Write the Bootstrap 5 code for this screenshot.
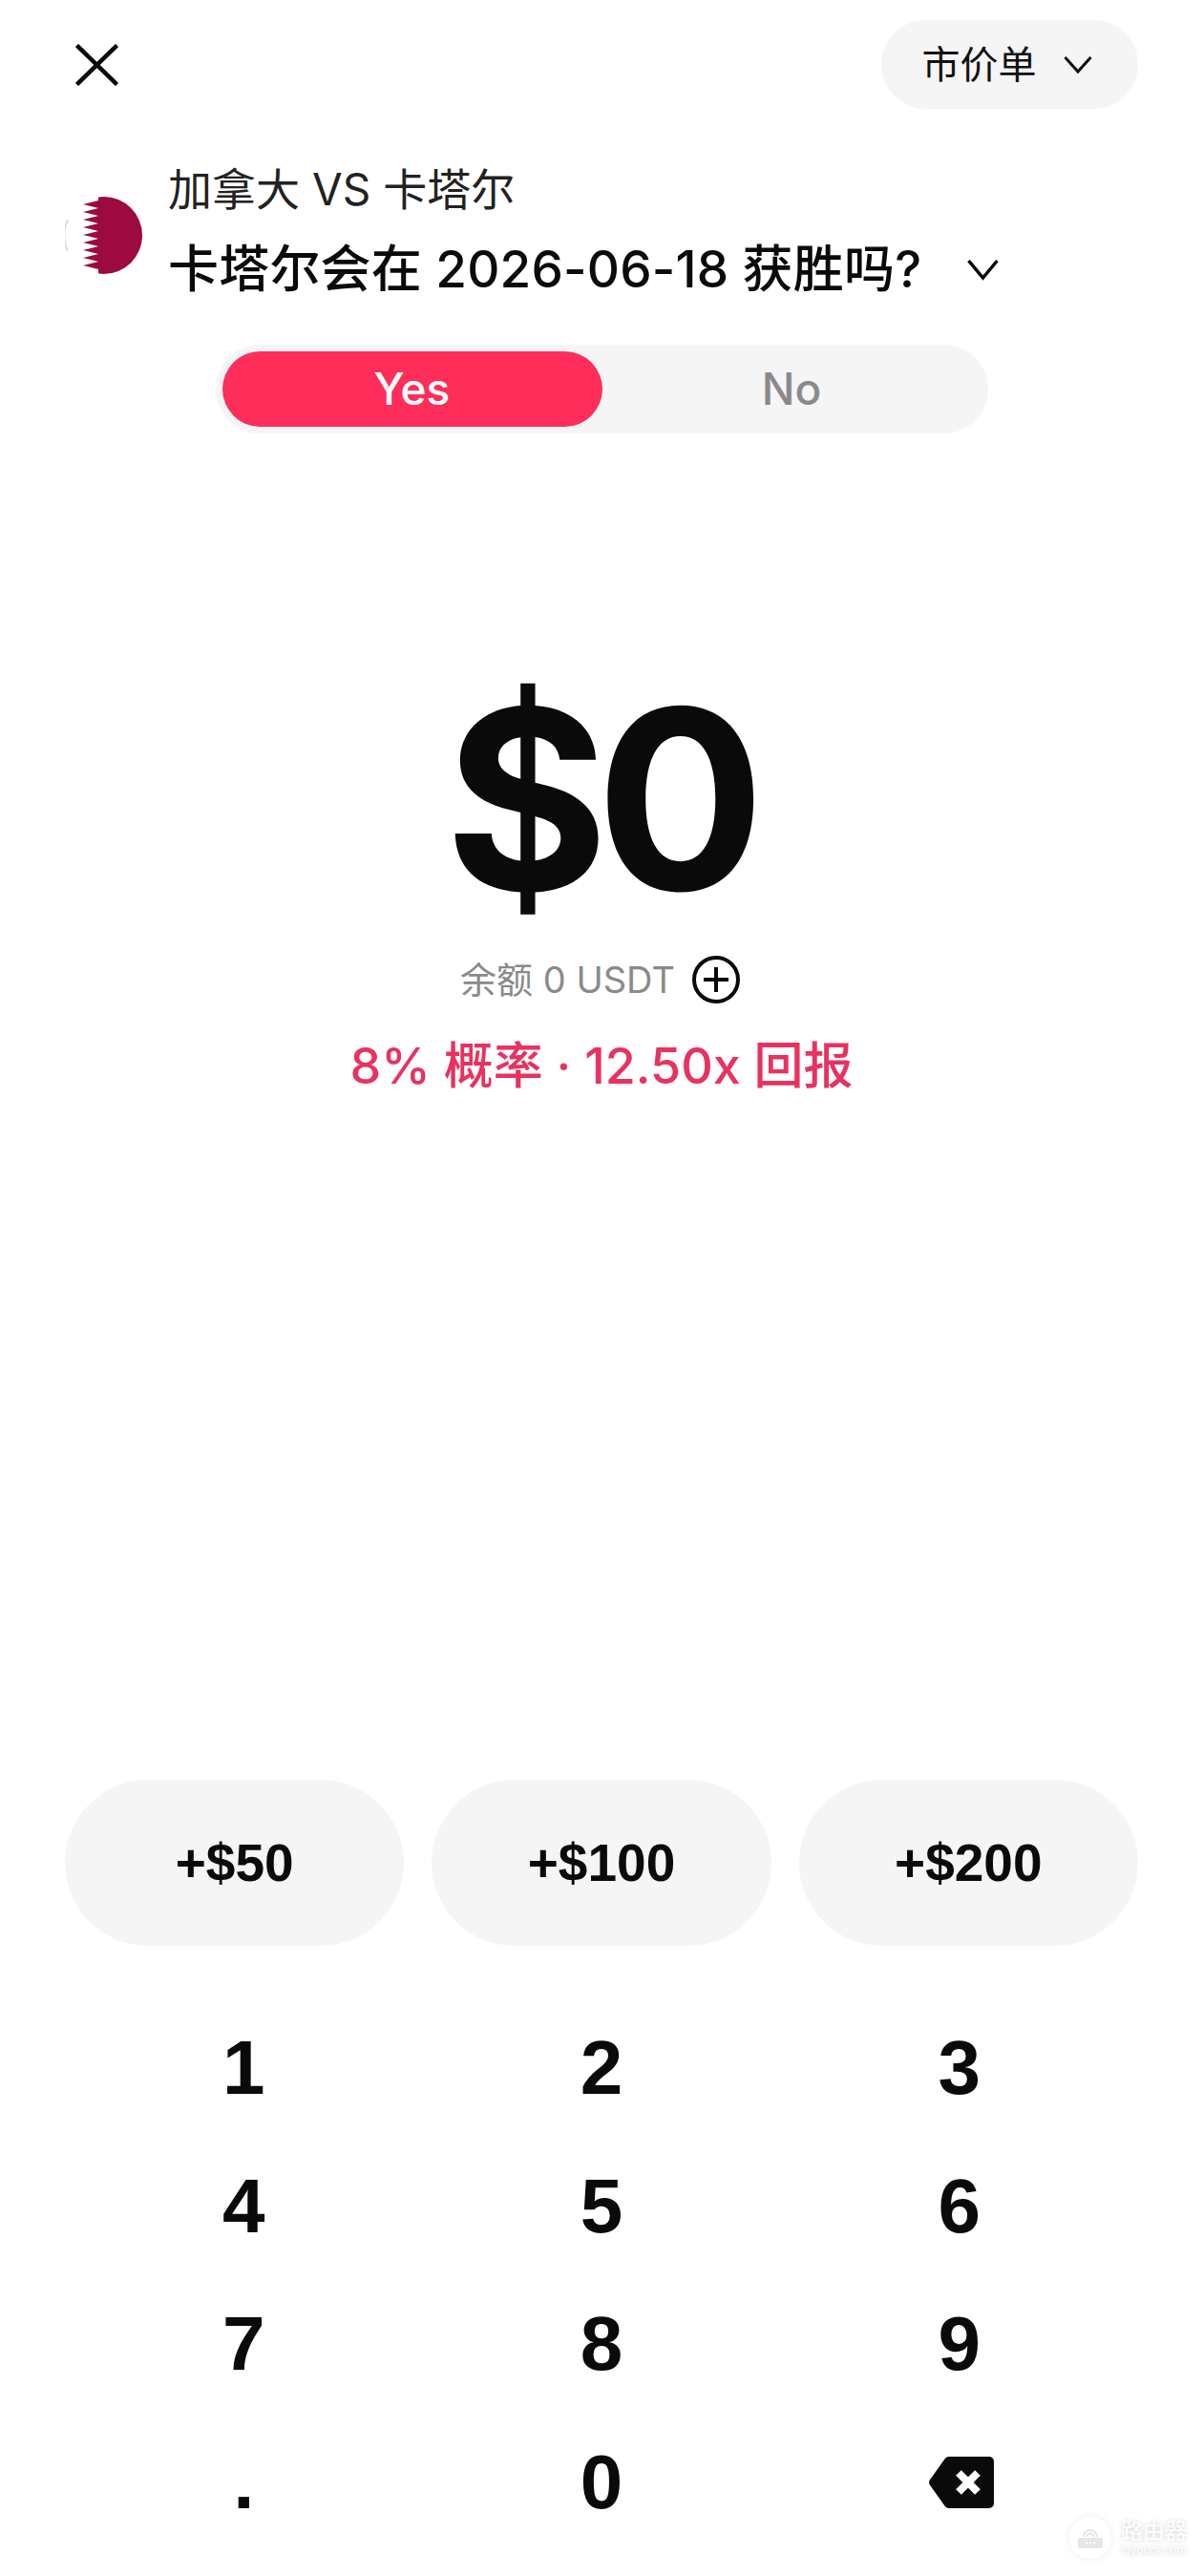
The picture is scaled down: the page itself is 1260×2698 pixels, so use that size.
<!DOCTYPE html>
<html lang="zh-CN">
<head>
    <meta charset="UTF-8">
    <meta name="viewport" content="width=device-width, initial-scale=1.0">
    <title>市价单</title>
    <link rel="stylesheet" href="https://cdn.jsdelivr.net/npm/bootstrap@5.3.0/dist/css/bootstrap.min.css">
    <style>
        body {
            background-color: #fff;
            color: #0a0a0a;
            font-family: Inter, "Noto Sans CJK SC", sans-serif;
        }
        .order-page {
            height: 2698px;
            padding: 21px 68px 26px 68px;
            overflow: hidden;
        }
        .close-btn {
            margin-left: 11px;
            line-height: 0;
        }
        .type-pill {
            width: 269px;
            height: 93px;
            background-color: #f5f5f6;
            font-size: 40px;
            gap: 28px;
            padding-right: 6px;
            color: #111;
        }
        .market-row {
            margin-top: 51px;
            gap: 27px;
        }
        .market-flag {
            margin-top: 10px;
        }
        .match-name {
            font-size: 46px;
            line-height: 66px;
            height: 66px;
            color: #222;
        }
        .market-question {
            font-size: 53px;
            font-weight: 500;
            letter-spacing: .2px;
            line-height: 70px;
            margin-top: 16px;
            gap: 48px;
        }
        .side-toggle {
            width: 809px;
            height: 93px;
            margin-top: 44px;
            padding: 7px;
            background-color: #f5f5f6;
            font-size: 46px;
            font-weight: 500;
        }
        .side-yes {
            width: 398px;
            background-color: #ff2d5a;
            color: #fff;
        }
        .side-no {
            color: #8a8a8a;
        }
        .amount-value {
            font-size: 262px;
            font-weight: 650;
            line-height: 300px;
            letter-spacing: -13px;
            margin-top: 233px;
            padding-right: 6px;
        }
        .balance-row {
            font-size: 38px;
            color: #8a8a8a;
            gap: 18px;
            margin-top: 9px;
            padding-right: 3px;
            line-height: 60px;
        }
        .odds-line {
            font-size: 52px;
            font-weight: 500;
            color: #e8325f;
            line-height: 70px;
            margin-top: 26px;
        }
        .quick-row {
            gap: 29px;
        }
        .quick-btn {
            flex: 1 1 0;
            height: 174px;
            background-color: #f5f5f6;
            border: 0;
            border-radius: 87px;
            color: #0a0a0a;
            font-family: "Liberation Sans", sans-serif;
            font-size: 55px;
            font-weight: 700;
        }
        .key-pad {
            margin-top: 56px;
        }
        .key-cell {
            height: 144.5px;
            font-family: "Liberation Sans", sans-serif;
            font-size: 80px;
            font-weight: 700;
            line-height: 1;
        }
        .water-mark {
            position: absolute;
            left: 1120px;
            top: 2636px;
            color: #fff;
            gap: 10px;
        }
        .water-circle {
            width: 44px;
            height: 44px;
            background-color: #fff;
            box-shadow: 0 0 8px rgba(0, 0, 0, .08);
        }
        .water-title {
            font-size: 23px;
            line-height: 26px;
            text-shadow: 0 0 5px rgba(0, 0, 0, .2);
        }
        .water-site {
            font-size: 12px;
            line-height: 14px;
            text-shadow: 0 0 4px rgba(0, 0, 0, .25);
        }
    </style>
</head>
<body class="position-relative">
<div class="order-page d-flex flex-column">
    <div class="d-flex justify-content-between align-items-center">
        <div class="close-btn">
            <svg width="45" height="44" viewBox="0 0 45 44" fill="none" stroke="#0a0a0a" stroke-width="4.5"><path d="M1.5 1.5 43.5 42.5M43.5 1.5 1.5 42.5"/></svg>
        </div>
        <div class="type-pill d-flex align-items-center justify-content-center rounded-pill">
            <span>市价单</span>
            <svg width="30" height="20" viewBox="0 0 30 20" fill="none" stroke="#0a0a0a" stroke-width="3"><path d="M1.5 2 15 17 28.5 2"/></svg>
        </div>
    </div>

    <div class="market-row d-flex align-items-center">
        <svg class="market-flag flex-shrink-0" width="81" height="81" viewBox="0 0 81 81">
            <defs><clipPath id="flagClip"><circle cx="40.5" cy="40.5" r="40.5"/></clipPath></defs>
            <g clip-path="url(#flagClip)">
                <rect width="81" height="81" fill="#fff"/>
                <polygon fill="#9c0a40" points="81,0 35,0 35,4 19,8 35,12 19,16 35,20 19,24 35,28 19,32 35,36 19,40 35,44 19,48 35,52 19,56 35,60 19,64 35,68 19,72 35,76 35,81 81,81"/>
            </g>
            <path d="M3 24A40 40 0 0 0 3 57" fill="none" stroke="#dcdcdc" stroke-width="2"/>
        </svg>
        <div>
            <div class="match-name">加拿大 VS 卡塔尔</div>
            <div class="market-question d-flex align-items-center">
                <span>卡塔尔会在 2026-06-18 获胜吗?</span>
                <svg width="33" height="23" viewBox="0 0 33 23" fill="none" stroke="#0a0a0a" stroke-width="3.5"><path d="M1.5 2 16.5 20 31.5 2"/></svg>
            </div>
        </div>
    </div>

    <div class="side-toggle d-flex mx-auto rounded-pill">
        <div class="side-yes d-flex align-items-center justify-content-center rounded-pill">Yes</div>
        <div class="side-no d-flex flex-grow-1 align-items-center justify-content-center">No</div>
    </div>

    <div class="amount-value text-center">$0</div>
    <div class="balance-row d-flex justify-content-center align-items-center">
        <span>余额 0 USDT</span>
        <svg width="50" height="50" viewBox="0 0 50 50" fill="none" stroke="#0a0a0a" stroke-width="4"><circle cx="25" cy="25" r="23"/><path d="M25 12V38M12 25H38"/></svg>
    </div>
    <div class="odds-line text-center">8% 概率 · 12.50x 回报</div>

    <div class="quick-row d-flex mt-auto">
        <button class="quick-btn btn" type="button">+$50</button>
        <button class="quick-btn btn" type="button">+$100</button>
        <button class="quick-btn btn" type="button">+$200</button>
    </div>

    <div class="key-pad row g-0">
        <div class="key-cell col-4 d-flex align-items-center justify-content-center">1</div>
        <div class="key-cell col-4 d-flex align-items-center justify-content-center">2</div>
        <div class="key-cell col-4 d-flex align-items-center justify-content-center">3</div>
        <div class="key-cell col-4 d-flex align-items-center justify-content-center">4</div>
        <div class="key-cell col-4 d-flex align-items-center justify-content-center">5</div>
        <div class="key-cell col-4 d-flex align-items-center justify-content-center">6</div>
        <div class="key-cell col-4 d-flex align-items-center justify-content-center">7</div>
        <div class="key-cell col-4 d-flex align-items-center justify-content-center">8</div>
        <div class="key-cell col-4 d-flex align-items-center justify-content-center">9</div>
        <div class="key-cell col-4 d-flex align-items-center justify-content-center">.</div>
        <div class="key-cell col-4 d-flex align-items-center justify-content-center">0</div>
        <div class="key-cell col-4 d-flex align-items-center justify-content-center">
            <svg class="ms-1" width="68" height="54" viewBox="0 0 68 54">
                <path fill="#0a0a0a" d="M21 0H63a5 5 0 0 1 5 5V49a5 5 0 0 1-5 5H21a5 5 0 0 1-4-1.8L1.5 30.5a5 5 0 0 1 0-7L17 1.8A5 5 0 0 1 21 0Z"/>
                <path fill="none" stroke="#fff" stroke-width="8" d="M31 17 51 37M51 17 31 37"/>
            </svg>
        </div>
    </div>
</div>

<div class="water-mark d-flex align-items-center">
    <div class="water-circle d-flex align-items-center justify-content-center rounded-circle flex-shrink-0">
        <svg width="28" height="28" viewBox="0 0 28 28" fill="none"><path d="M7 13a7 7 0 0 1 14 0M10.5 13a3.5 3.5 0 0 1 7 0" stroke="#e6e6e6" stroke-width="2"/><rect x="1" y="14" width="26" height="11" rx="2" fill="#e6e6e6"/><path d="M9 19.5h2M13 19.5h2M17 19.5h2" stroke="#fff" stroke-width="2"/></svg>
    </div>
    <div>
        <div class="water-title">路由器</div>
        <div class="water-site">luyouqi.com</div>
    </div>
</div>
</body>
</html>
